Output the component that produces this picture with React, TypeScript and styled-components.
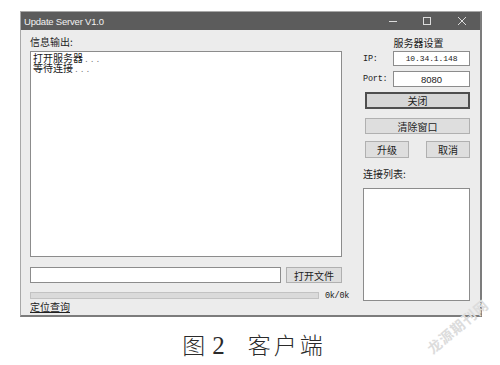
import styled, { createGlobalStyle } from "styled-components";

const GlobalStyle = createGlobalStyle`
  html, body {
    margin: 0;
    padding: 0;
    background: #ffffff;
  }
  body {
    font-family: "Noto Sans CJK SC", "Liberation Sans", sans-serif;
    color: #222;
  }
`;

const cjk = `"Noto Sans CJK SC", "Liberation Sans", sans-serif`;
const mono = `"Liberation Mono", "Noto Sans CJK SC", monospace`;

export default function App() {
  return (
    <>
      <GlobalStyle />
      <Page>
        <Window>
          <TitleBar>
            <Title>Update Server V1.0</Title>
            <Controls>
              <CtrlButton>
                <svg width="10" height="10" viewBox="0 0 10 10">
                  <line x1="1" y1="5.5" x2="9" y2="5.5" stroke="#dcdcdc" strokeWidth="1" />
                </svg>
              </CtrlButton>
              <CtrlButton>
                <svg width="10" height="10" viewBox="0 0 10 10">
                  <rect x="1.5" y="1.5" width="7" height="7" fill="none" stroke="#dcdcdc" strokeWidth="1" />
                </svg>
              </CtrlButton>
              <CtrlButton>
                <svg width="10" height="10" viewBox="0 0 10 10">
                  <path d="M1 1 L9 9 M9 1 L1 9" stroke="#dcdcdc" strokeWidth="1" />
                </svg>
              </CtrlButton>
            </Controls>
          </TitleBar>

          <Body>
            <LeftCol>
              <Label>信息输出:</Label>
              <OutputBox>
                <OutLine>打开服务器<Dots>...</Dots></OutLine>
                <OutLine>等待连接<Dots>...</Dots></OutLine>
              </OutputBox>
              <FileRow>
                <TextField />
                <Button $width={56}>打开文件</Button>
              </FileRow>
              <ProgressRow>
                <Progress />
                <SmallMono>0k/0k</SmallMono>
              </ProgressRow>
              <LinkText>定位查询</LinkText>
            </LeftCol>

            <RightCol>
              <Heading>服务器设置</Heading>
              <FieldRow>
                <FieldLabel>IP:</FieldLabel>
                <ValueBox $mono>10.34.1.148</ValueBox>
              </FieldRow>
              <FieldRow $gap={5} $height={16}>
                <FieldLabel>Port:</FieldLabel>
                <ValueBox>8080</ValueBox>
              </FieldRow>
              <Button $primary $top={5} $offset={2}>关闭</Button>
              <Button $top={9} $offset={2}>清除窗口</Button>
              <ButtonPair>
                <Button $width={44}>升级</Button>
                <Button $width={44}>取消</Button>
              </ButtonPair>
              <ListLabel>连接列表:</ListLabel>
              <ListBox />
            </RightCol>
          </Body>
        </Window>

        <Caption>
          <span>图</span>
          <Num>2</Num>
          <CaptionName>客户端</CaptionName>
        </Caption>
        <Watermark>龙源期刊网</Watermark>
      </Page>
    </>
  );
}

const Page = styled.div`
  position: relative;
  width: 500px;
  height: 365px;
  box-sizing: border-box;
  padding-top: 11px;
  overflow: hidden;
`;

const Window = styled.div`
  width: 462px;
  height: 306px;
  margin-left: 20px;
  box-sizing: border-box;
  background: #ececec;
  border: 1px solid #a8a8a8;
  border-right: 2px solid #7c7c7c;
  border-bottom: 2px solid #7c7c7c;
  display: flex;
  flex-direction: column;
`;

const TitleBar = styled.div`
  height: 18px;
  background: #5c5c5c;
  display: flex;
  align-items: center;
  padding-left: 3px;
`;

const Title = styled.span`
  font-family: "Liberation Sans", sans-serif;
  font-size: 9.5px;
  letter-spacing: -0.2px;
  color: #f2f2f2;
`;

const Controls = styled.div`
  margin-left: auto;
  margin-right: 1px;
  display: flex;
  height: 100%;
`;

const CtrlButton = styled.div`
  width: 34.5px;
  height: 100%;
  display: flex;
  align-items: center;
  justify-content: center;
`;

const Body = styled.div`
  flex: 1;
  display: grid;
  grid-template-columns: 312px 107px;
  column-gap: 21px;
  padding: 0 10px 0 9px;
`;

const LeftCol = styled.div`
  display: flex;
  flex-direction: column;
`;

const RightCol = styled.div`
  display: flex;
  flex-direction: column;
`;

const Label = styled.div`
  height: 21px;
  box-sizing: border-box;
  padding-top: 5px;
  font-family: ${cjk};
  font-size: 10px;
  line-height: 13px;
  color: #222;
`;

const OutputBox = styled.div`
  height: 206px;
  box-sizing: border-box;
  background: #fff;
  border: 1px solid #8c8c8c;
  padding: 1px 2px;
`;

const OutLine = styled.div`
  font-family: ${cjk};
  font-size: 10px;
  line-height: 10px;
  height: 10px;
  color: #1a1a1a;
`;

const Dots = styled.span`
  font-family: ${mono};
  font-size: 8px;
  letter-spacing: 1px;
  color: #777;
  margin-left: 1px;
`;

const FileRow = styled.div`
  margin-top: 10px;
  height: 16px;
  display: flex;
  align-items: center;
  gap: 5px;
`;

const TextField = styled.div`
  width: 251px;
  height: 16px;
  box-sizing: border-box;
  background: #fff;
  border: 1px solid #8c8c8c;
`;

const Button = styled.div<{
  $width?: number;
  $primary?: boolean;
  $top?: number;
  $offset?: number;
}>`
  ${({ $width }) => ($width ? `width: ${$width}px;` : "")}
  height: ${({ $primary }) => ($primary ? 17 : 16)}px;
  margin-top: ${({ $top }) => $top ?? 0}px;
  margin-left: ${({ $offset }) => $offset ?? 0}px;
  box-sizing: border-box;
  background: ${({ $primary }) => ($primary ? "#d6d6d6" : "#dedede")};
  border: ${({ $primary }) =>
    $primary ? "2px solid #4e4e4e" : "1px solid #b0b0b0"};
  display: flex;
  align-items: center;
  justify-content: center;
  font-family: ${cjk};
  font-size: 10px;
  color: #222;
`;

const ProgressRow = styled.div`
  margin-top: 9px;
  height: 7px;
  display: flex;
  align-items: center;
  gap: 6px;
`;

const Progress = styled.div`
  flex-shrink: 0;
  width: 289px;
  height: 7px;
  box-sizing: border-box;
  background: #dadada;
  border: 1px solid #c2c2c2;
`;

const SmallMono = styled.span`
  flex-shrink: 0;
  font-family: ${mono};
  font-size: 8.5px;
  letter-spacing: -0.3px;
  color: #222;
  white-space: nowrap;
`;

const LinkText = styled.div`
  margin-top: 2px;
  font-family: ${cjk};
  font-size: 10px;
  line-height: 12px;
  text-decoration: underline;
  color: #222;
`;

const Heading = styled.div`
  height: 21px;
  box-sizing: border-box;
  padding-top: 6px;
  padding-left: 4px;
  text-align: center;
  font-family: ${cjk};
  font-size: 10px;
  line-height: 14px;
  color: #222;
`;

const FieldRow = styled.div<{ $gap?: number; $height?: number }>`
  margin-top: ${({ $gap }) => $gap ?? 0}px;
  height: ${({ $height }) => $height ?? 15}px;
  display: flex;
  align-items: center;
`;

const FieldLabel = styled.span`
  width: 30px;
  font-family: ${mono};
  font-size: 8.5px;
  letter-spacing: -0.2px;
  color: #222;
`;

const ValueBox = styled.div<{ $mono?: boolean }>`
  flex: 1;
  height: 100%;
  box-sizing: border-box;
  background: #fff;
  border: 1px solid #8c8c8c;
  display: flex;
  align-items: center;
  justify-content: center;
  font-family: ${({ $mono }) => ($mono ? mono : `"Liberation Sans", sans-serif`)};
  font-size: ${({ $mono }) => ($mono ? 8 : 9.5)}px;
  letter-spacing: ${({ $mono }) => ($mono ? "-0.1px" : "0")};
  color: #222;
`;

const ButtonPair = styled.div`
  margin-top: 7px;
  margin-left: 2px;
  display: flex;
  justify-content: space-between;
  height: 17px;

  & > div {
    height: 17px;
  }
`;

const ListLabel = styled.div`
  margin-top: 6px;
  height: 19px;
  display: flex;
  align-items: center;
  font-family: ${cjk};
  font-size: 10px;
  color: #222;
`;

const ListBox = styled.div`
  margin-top: 5px;
  height: 113px;
  box-sizing: border-box;
  background: #fff;
  border: 1px solid #8c8c8c;
`;

const Caption = styled.div`
  margin-top: 12px;
  display: flex;
  justify-content: center;
  align-items: baseline;
  padding-left: 5px;
  font-family: ${cjk};
  font-weight: 300;
  font-size: 23px;
  line-height: 30px;
  color: #2a2a2a;
`;

const Num = styled.span`
  font-family: "Liberation Serif", serif;
  font-size: 25px;
  margin-left: 7px;
`;

const CaptionName = styled.span`
  margin-left: 23px;
  letter-spacing: 3px;
  margin-right: -3px;
`;

const Watermark = styled.div`
  position: absolute;
  left: 420px;
  top: 316px;
  transform: rotate(-40deg);
  font-family: ${cjk};
  font-weight: bold;
  font-size: 14px;
  letter-spacing: 1px;
  color: #dcdcdc;
  white-space: nowrap;
`;
